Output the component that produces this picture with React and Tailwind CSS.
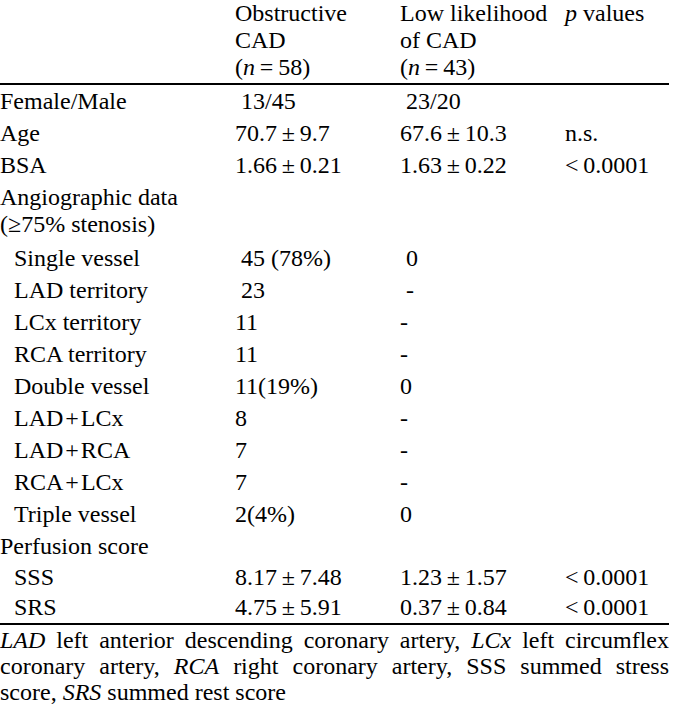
import React from "react";

const T = "\u2009";
const H = "\u200a";
const pm = (a, b) => `${a}${T}±${T}${b}`;

const rows = [
  { label: "Female/Male", a: "\u00a013/45", b: "\u00a023/20", p: "" },
  { label: "Age", a: pm("70.7", "9.7"), b: pm("67.6", "10.3"), p: "n.s." },
  { label: "BSA", a: pm("1.66", "0.21"), b: pm("1.63", "0.22"), p: `<${T}0.0001` },
  { label: ["Angiographic data", "(≥75% stenosis)"], a: "", b: "", p: "", h: "h-[61px]" },
  { label: "Single vessel", indent: true, a: "\u00a045 (78%)", b: "\u00a00", p: "" },
  { label: "LAD territory", indent: true, a: "\u00a023", b: "\u00a0-", p: "" },
  { label: "LCx territory", indent: true, a: "11", b: "-", p: "" },
  { label: "RCA territory", indent: true, a: "11", b: "-", p: "" },
  { label: "Double vessel", indent: true, a: "11(19%)", b: "0", p: "" },
  { label: `LAD${H}+${H}LCx`, indent: true, a: "8", b: "-", p: "" },
  { label: `LAD${H}+${H}RCA`, indent: true, a: "7", b: "-", p: "" },
  { label: `RCA${H}+${H}LCx`, indent: true, a: "7", b: "-", p: "" },
  { label: "Triple vessel", indent: true, a: "2(4%)", b: "0", p: "" },
  { label: "Perfusion score", a: "", b: "", p: "", h: "h-[31px]" },
  { label: "SSS", indent: true, a: pm("8.17", "7.48"), b: pm("1.23", "1.57"), p: `<${T}0.0001`, h: "h-[30px]" },
  { label: "SRS", indent: true, a: pm("4.75", "5.91"), b: pm("0.37", "0.84"), p: `<${T}0.0001`, h: "h-[31px]" },
];

function Row({ r }) {
  const multi = Array.isArray(r.label);
  return (
    <div className={`grid grid-cols-[235px_165px_1fr] ${r.h || "h-[32px]"} items-start`}>
      <div className={`${r.indent ? "pl-[14px]" : ""} leading-[27px] pt-[2px]`}>
        {multi ? (
          <>
            <div>{r.label[0]}</div>
            <div>{r.label[1]}</div>
          </>
        ) : (
          r.label
        )}
      </div>
      <div className="leading-[27px] pt-[2px] whitespace-pre">{r.a}</div>
      <div className="grid grid-cols-[165px_1fr]">
        <div className="leading-[27px] pt-[2px] whitespace-pre">{r.b}</div>
        <div className="leading-[27px] pt-[2px] whitespace-pre">{r.p}</div>
      </div>
    </div>
  );
}

export default function App() {
  return (
    <div className="w-[679px] h-[718px] bg-white text-black overflow-hidden [font-family:'Liberation_Serif','Times_New_Roman',serif] text-[24px]">
      <div className="w-[669px]">
        <div className="grid grid-cols-[235px_165px_165px_1fr] leading-[27px] pb-[2px]">
          <div></div>
          <div>
            <div>Obstructive</div>
            <div>CAD</div>
            <div>
              (<i>n</i>
              {T}={T}58)
            </div>
          </div>
          <div>
            <div>Low likelihood</div>
            <div>of CAD</div>
            <div>
              (<i>n</i>
              {T}={T}43)
            </div>
          </div>
          <div className="whitespace-nowrap">
            <i>p</i> values
          </div>
        </div>
        <div className="border-t-2 border-black"></div>
        <div className="pt-[1px]">
          {rows.map((r, i) => (
            <Row key={i} r={r} />
          ))}
        </div>
        <div className="border-t-2 border-black"></div>
        <div className="leading-[26px] pt-[2px]">
          <p className="text-justify [text-align-last:justify]">
            <i>LAD</i> left anterior descending coronary artery, <i>LCx</i> left circumflex
          </p>
          <p className="text-justify [text-align-last:justify]">
            coronary artery, <i>RCA</i> right coronary artery, SSS summed stress
          </p>
          <p>
            score, <i>SRS</i> summed rest score
          </p>
        </div>
      </div>
    </div>
  );
}
